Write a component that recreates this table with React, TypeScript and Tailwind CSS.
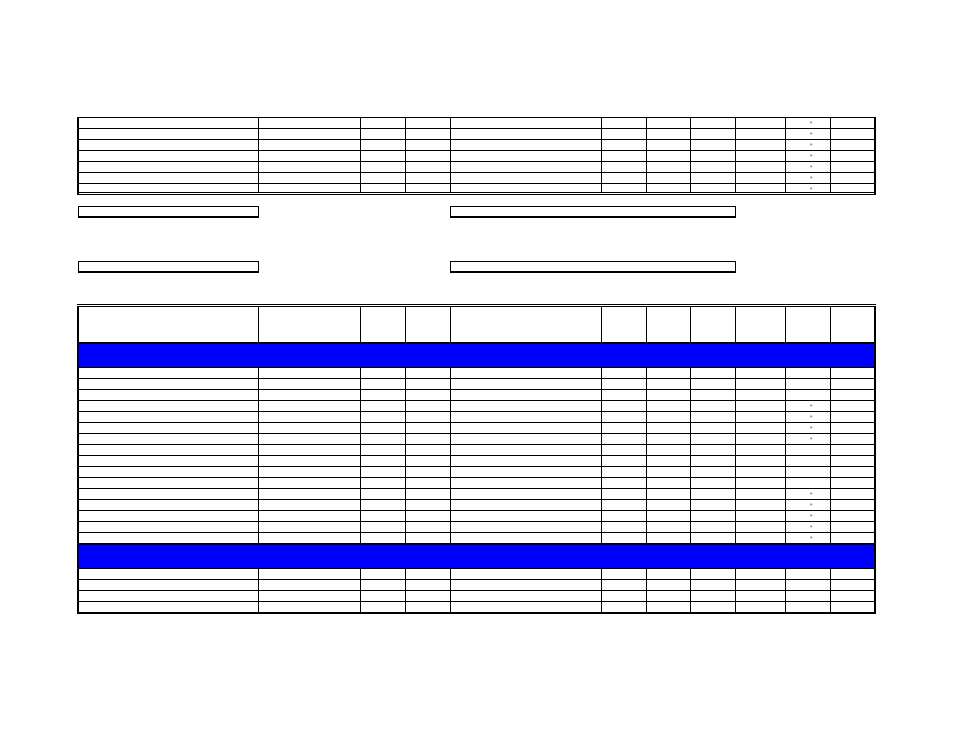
import React from "react";

// column widths incl. the 1px right divider (last one has none)
const colClasses = [
  "w-[180px]",
  "w-[102px]",
  "w-[45px]",
  "w-[45px]",
  "w-[151px]",
  "w-[45px]",
  "w-[44px]",
  "w-[45px]",
  "w-[50px]",
  "w-[45px]",
  "w-[43px]",
];

const STAR_COL = 9;

function Row({
  star = false,
  height = "h-[11px]",
  bottom = true,
}: {
  star?: boolean;
  height?: string;
  bottom?: boolean;
}) {
  return (
    <div className={`flex ${height} ${bottom ? "border-b border-black" : ""}`}>
      {colClasses.map((w, i) => (
        <div
          key={i}
          className={`${w} shrink-0 ${
            i < colClasses.length - 1 ? "border-r border-black" : ""
          } flex justify-center`}
        >
          {star && i === STAR_COL && (
            <span className="text-[7px] leading-[7px] pt-[2px] pl-[6px] text-gray-500">
              *
            </span>
          )}
        </div>
      ))}
    </div>
  );
}

function BlueBand() {
  return (
    <div className="h-[26px] border-t-2 border-b border-black bg-[#0000ff]" />
  );
}

function FieldBox({ width }: { width: string }) {
  return <div className={`${width} h-[12px] border border-b-2 border-black`} />;
}

export default function App() {
  const sectionA = [
    false, false, false, true, true, true, true,
    false, false, false, false, true, true, true, true,
  ];

  return (
    <div
      className="w-[954px] h-[738px] bg-white pt-[117px]"
      style={{ fontFamily: '"Liberation Sans", Arial, sans-serif' }}
    >
      <div className="ml-[77px] w-[799px]">
        {/* top grid */}
        <div className="border-t border-b border-l-2 border-r-2 border-black">
          {Array.from({ length: 6 }).map((_, i) => (
            <Row key={i} star />
          ))}
          <Row star height="h-[9px]" />
          <div className="h-px" />
        </div>

        {/* field boxes */}
        <div className="flex pl-px mt-[11px]">
          <FieldBox width="w-[181px]" />
          <div className="w-[191px]" />
          <FieldBox width="w-[286px]" />
        </div>
        <div className="flex pl-px mt-[43px]">
          <FieldBox width="w-[181px]" />
          <div className="w-[191px]" />
          <FieldBox width="w-[286px]" />
        </div>

        {/* main grid */}
        <div className="mt-[31px] border-t border-black pt-px">
          <div className="border-t border-b-2 border-l-2 border-r-2 border-black">
            <Row height="h-[35px]" bottom={false} />
            <BlueBand />
            {sectionA.map((s, i) => (
              <Row key={i} star={s} />
            ))}
            <Row star height="h-[10px]" bottom={false} />
            <BlueBand />
            <Row />
            <Row />
            <Row />
            <Row height="h-[10px]" bottom={false} />
          </div>
        </div>
      </div>
    </div>
  );
}
